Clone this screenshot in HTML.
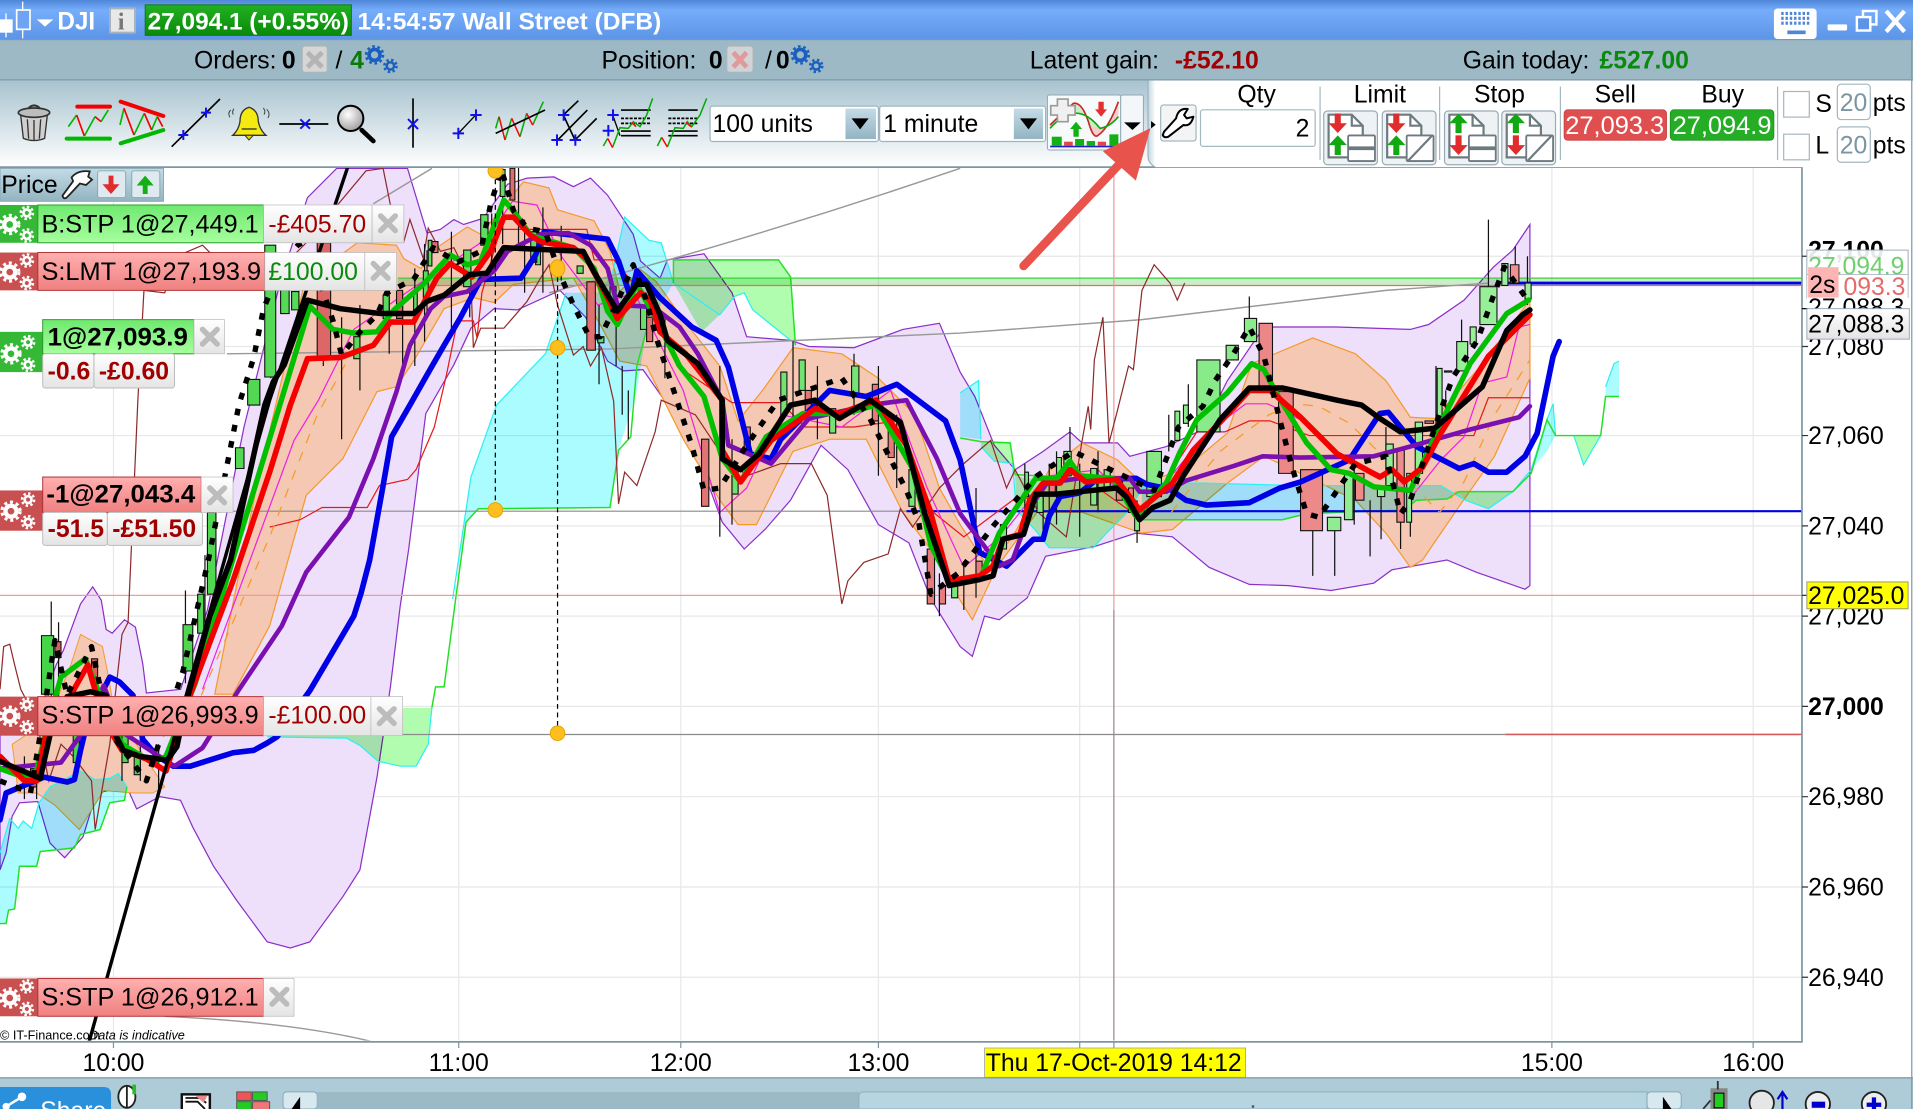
<!DOCTYPE html>
<html><head><meta charset="utf-8"><title>DJI</title>
<style>
html,body{margin:0;padding:0;background:#fff;overflow:hidden}
svg{display:block}
text{font-family:"Liberation Sans",Arial,sans-serif;font-size:20.3px;fill:#000}
.b{font-weight:bold}
.m{mix-blend-mode:multiply}
</style></head><body>
<svg width="1913" height="1109" viewBox="0 0 1568 909" xmlns="http://www.w3.org/2000/svg">
<defs>
<linearGradient id="hd" x1="0" y1="0" x2="0" y2="1"><stop offset="0" stop-color="#4f86d8"/><stop offset=".25" stop-color="#76adfb"/><stop offset="1" stop-color="#5c94e6"/></linearGradient>
<linearGradient id="tb" x1="0" y1="0" x2="0" y2="1"><stop offset="0" stop-color="#a8c3cf"/><stop offset="1" stop-color="#fff"/></linearGradient>
<linearGradient id="gl" x1="0" y1="0" x2="0" y2="1"><stop offset="0" stop-color="#6fe86f"/><stop offset="1" stop-color="#a6ff9e"/></linearGradient>
<linearGradient id="rl" x1="0" y1="0" x2="0" y2="1"><stop offset="0" stop-color="#ffb0b0"/><stop offset="1" stop-color="#f08080"/></linearGradient>
<linearGradient id="wb" x1="0" y1="0" x2="0" y2="1"><stop offset="0" stop-color="#fff"/><stop offset="1" stop-color="#e4e4e4"/></linearGradient>
<linearGradient id="hg" x1="0" y1="0" x2="0" y2="1"><stop offset="0" stop-color="#22b022"/><stop offset="1" stop-color="#0a8a0a"/></linearGradient>
<linearGradient id="ctg" x1="0" y1="0" x2="1" y2="0"><stop offset="0" stop-color="#48d448"/><stop offset="1" stop-color="#9bf09b"/></linearGradient>
<linearGradient id="ctr" x1="0" y1="0" x2="1" y2="0"><stop offset="0" stop-color="#d85c5c"/><stop offset="1" stop-color="#f09090"/></linearGradient>
<linearGradient id="dd" x1="0" y1="0" x2="0" y2="1"><stop offset="0" stop-color="#c3dbe6"/><stop offset="1" stop-color="#93b4c2"/></linearGradient>
<linearGradient id="tab" x1="0" y1="0" x2="1" y2="0"><stop offset="0" stop-color="#c2d6df"/><stop offset="1" stop-color="#fff"/></linearGradient>
<radialGradient id="mg" cx=".4" cy=".35" r=".7"><stop offset="0" stop-color="#fff"/><stop offset="1" stop-color="#9a9a9a"/></radialGradient>
<clipPath id="cc"><rect x="0" y="137" width="1477" height="716"/></clipPath>
<g id="gears" fill="none" stroke="#fff">
<circle cx="8" cy="17" r="4.500" stroke-width="3.500"/><circle cx="8" cy="17" r="7.500" stroke-width="2.500" stroke-dasharray="2.500 2.400"/>
<circle cx="22" cy="7.500" r="2.800" stroke-width="2.200"/><circle cx="22" cy="7.500" r="5" stroke-width="2" stroke-dasharray="2 1.900"/>
<circle cx="22" cy="26" r="2.800" stroke-width="2.200"/><circle cx="22" cy="26" r="5" stroke-width="2" stroke-dasharray="2 1.900"/>
</g>
<g id="bg" fill="none" stroke="#1a5fc0">
<circle cx="7" cy="8" r="4.500" stroke-width="3"/><circle cx="7" cy="8" r="7" stroke-width="2" stroke-dasharray="2.200 2.200"/>
<circle cx="20" cy="17" r="3" stroke-width="2"/><circle cx="20" cy="17" r="5" stroke-width="2" stroke-dasharray="2 2"/>
</g>
<g id="x"><path d="M-6-6L6 6M6-6L-6 6" stroke="#bcbcbc" stroke-width="4.500" stroke-linecap="round"/></g>
<g id="doc"><path d="M0 1h19l9 9v26H0z" fill="#fff" stroke="#6d7a80" stroke-width="1.800"/><path d="M19 1v9h9" fill="none" stroke="#6d7a80" stroke-width="1.800"/></g>
</defs>

<rect width="1568" height="909" fill="#fff"/>
<rect width="1568" height="33" fill="url(#hd)"/>
<rect y="33" width="1568" height="33" fill="#9db9c5"/>
<path d="M0 32.500H1568M0 65.500H1568" stroke="#7e98a5" stroke-width="1"/>
<rect y="66" width="942" height="71" fill="url(#tb)"/>

<!-- CHART -->
<g clip-path="url(#cc)">
<path d="M0 210H1477M0 284H1477M0 357H1477M0 431H1477M0 505H1477M0 579H1477M0 653H1477M0 727H1477M0 801H1477M93 137V853M376 137V853M558 137V853M720 137V853M885 137V853M1272 137V853M1437 137V853" stroke="#e6e8ea" stroke-width="1"/>
<!-- purple band -->
<path d="M0 600L30 590L46 545L52 533L66 495L76 481L83 492L87 516L92 519L102 508L111 514L117 544L120 568L148 565L170 500L200 350L230 230L252 162L276 138L334 138L350 191L361 188L372 180L380 184L396 179L416 151L432 146L454 145L470 153L484 146L498 160L519 192L525 214L541 228L547 213L577 208L600 240L612 276L648 279L663 284L700 285L740 270L770 265L787 305L799 325L815 365L832 385L855 370L877 354L887 363L916 363L926 374L956 366L986 352L1006 312L1036 268L1096 268L1156 270L1171 266L1200 246L1224 219L1240 205L1254 184L1254 480L1250 483L1210 469L1186 459L1141 467L1126 478L1091 484L1056 480L1024 479L991 465L961 440L931 437L897 448L857 456L842 490L819 508L807 505L797 538L787 530L763 491L745 445L720 430L695 385L673 365L648 410L627 434L610 450L592 428L578 390L560 350L527 303L511 304L498 296L480 260L459 238L424 254L405 253L386 269L372 299L349 339L335 450L328 497L320 563L309 637L295 713L281 735L254 772L238 777L219 772L194 738L175 710L158 678L148 656L131 653L112 663L104 645L79 650L68 686L53 703L41 691L31 657L16 658L10 669L5 699L0 713Z" fill="#eee0fb" stroke="#8a2fc8" stroke-width="1"/>
<!-- orange band -->
<path d="M176 569L210 400L250 230L293 199L325 201L331 212L345 220L358 203L383 186L394 192L429 149L450 154L457 172L487 181L500 206L508 239L525 221L538 231L560 262L590 300L605 345L625 320L650 285L690 290L720 310L750 340L770 400L787 430L810 465L830 440L860 385L887 363L916 377L936 396L970 385L1006 355L1026 298L1076 277L1111 290L1136 312L1156 342L1176 343L1211 303L1254 246L1254 310L1225 374L1196 415L1166 459L1156 465L1136 437L1111 410L1066 388L1036 374L1006 396L961 434L936 437L887 420L850 420L817 465L797 508L787 492L770 460L740 420L710 360L680 360L650 370L620 430L605 430L590 410L560 360L530 300L508 296L492 266L470 228L421 233L405 248L388 244L364 253L339 296L325 317L309 321L281 376L251 406L221 513L191 569Z" fill="#f4c8b2" stroke="#f59a2a" stroke-width="1"/>
<path d="M58 545L66 520L84 530L88 550L95 590L105 600L135 645L125 650L110 650L85 648L65 680L45 660L30 650L15 650L10 610L40 590Z" fill="#f4c8b2" stroke="#f59a2a" stroke-width=".8"/>
<!-- clouds (multiply) -->
<g class="m">
<path d="M0 699L8 671L15 679L19 673L26 679L32 658L41 645L66 632L78 639L90 638L97 634L104 645L102 656L90 658L82 680L66 684L61 695L33 698L30 710L16 710L12 745L7 746L5 757L0 757Z" fill="#aafcff"/>
<path d="M371 491L386 391L407 332L447 290L464 240L490 240L502 224L512 178L532 197L542 199L552 232L530 270L522 320L507 369L500 416L392 417L382 428Z" fill="#aafcff"/>
<path d="M552 213L638 213L648 227L652 283L648 279L617 254L610 240L602 243L590 258L575 272L552 232Z" fill="#b0fdb0"/>
<path d="M219 604L284 605L295 611L310 624L328 628L341 628L351 610L354 580L219 582Z" fill="#b0fdb0"/>
<path d="M787 322L802 312L804 360L787 358Z" fill="#aafcff"/>
<path d="M804 362L828 363L832 389L830 380L815 378L804 366Z" fill="#b0fdb0"/>
<path d="M832 389L840 392L940 395L923 421L907 437L896 449L884 449L860 449L849 435L833 418Z" fill="#b0fdb0"/>
<path d="M936 396L986 396L1066 398L1181 398L1201 410L1220 417L1196 403L1186 409L1161 410L1151 418L1071 421L1051 426L936 426Z" fill="#aafcff"/>
<path d="M1196 403L1240 403L1220 417L1201 410Z" fill="#b0fdb0"/>
<path d="M1220 417L1240 403L1255 388L1268 344L1273 331L1275 357L1268 370L1255 385L1240 403Z" fill="#aafcff"/>
<path d="M1290 357L1312 357L1305 369L1298 381Z" fill="#b0fdb0"/>
<path d="M1316 325L1316 317L1323 298L1327 296L1327 325Z" fill="#aafcff"/>
</g>
<g fill="none" stroke="#2cf0f0" stroke-width="1">
<path d="M0 699L8 671L15 679L19 673L26 679L32 658L41 645L66 632L78 639L90 638L97 634L104 645"/>
<path d="M371 491L386 391L407 332L447 290L464 240M502 224L512 178L532 197L542 199L552 232L590 258L602 243L610 240L617 254L648 279"/>
<path d="M787 322L802 312L804 360M804 366L815 378L830 380L833 418L849 435L860 449L884 449L896 449L907 437L923 421L940 395"/>
<path d="M936 396L986 396L1066 398L1181 398L1201 410L1220 417L1240 403L1255 385L1268 344L1273 331L1275 357"/>
<path d="M1290 357L1298 381L1305 369L1312 357M1316 317L1323 298L1327 296M219 604L284 605L295 611L310 624L328 628L341 628L351 610L354 580"/>
</g>
<g fill="none" stroke="#22e022" stroke-width="1.200">
<path d="M0 757L5 757L7 746L12 745L16 710L30 710L33 698L61 695L66 684L82 680L90 658L102 656L104 645"/>
<path d="M354 580L357 563L364 563L374 487L382 428L392 417L500 416L507 369L517 358L522 300L530 270M552 232L552 213L638 213L648 227L652 283"/>
<path d="M787 359L804 362L828 363L832 389L940 395M936 426L1051 426L1071 421L1151 418L1161 410L1186 409L1196 403L1240 403L1255 388L1268 344L1275 357L1312 357L1316 325L1327 325"/>
</g>
<!-- h lines -->
<g class="m"><rect x="326" y="228" width="1151" height="6" fill="#c8f0c8"/></g>
<path d="M326 228H1477" stroke="#3ecf3e" stroke-width="1"/>
<path d="M326 234H1477" stroke="#e56a6a" stroke-width="1"/>
<path d="M0 488H1477" stroke="#f29a9a" stroke-width="1"/>
<path d="M913 137V853" stroke="#f09a9a" stroke-width="1"/>
<path d="M913 500V853" stroke="#888" stroke-width=".8"/>
<path d="M450 240Q620 195 787 138M306 167L354 138" fill="none" stroke="#999" stroke-width="1.200"/>
<path d="M186 290L500 286L787 273L936 262L1136 238L1220 232" fill="none" stroke="#999" stroke-width="1.200"/>
<path d="M135 833Q241 838 306 854" fill="none" stroke="#999" stroke-width="1.200"/>
<path d="M0 419H743M0 602H1234" stroke="#8a8a8a" stroke-width="1"/>
<path d="M743 419H1477" stroke="#0000e6" stroke-width="1.800"/>
<path d="M1234 602H1477" stroke="#d65a5a" stroke-width="1.300"/>
<path d="M1235 232H1477" stroke="#0000e6" stroke-width="2.400"/>
<!-- brown thin -->
<path d="M0 565L3 530L8 528L12 545L17 565L30 590L40 640L50 610L60 620L75 640L78 680L90 610L100 520L105 510L113 328L118 238L135 240L145 210L166 201L180 215L215 235L250 200L300 140L314 138L320 168L331 198L336 180L347 212L351 187L361 206L372 203L386 231L388 285L394 269L405 269L413 269L432 247L443 228L450 217L457 250L470 291L478 284L484 300L493 285L503 329L507 413L512 387L522 398L537 354L542 328L570 340L590 370L612 390L640 380L665 380L678 406L690 495L695 476L708 461L728 454L738 417L748 432L770 400L790 380L812 361L815 370L825 400L832 385L840 400L852 421L874 440L887 361L892 333L894 352L897 295L904 260L909 363L915 340L925 300L929 303L936 238L946 217L959 232L965 246L971 232" fill="none" stroke="#8e2a2a" stroke-width="1"/>
<path d="M221 432L246 426L264 416L301 416L311 398L334 393L341 385L356 350L366 307L375 263L388 263L391 277L395 240L410 188L481 188L487 213L503 213L530 245L555 300L600 330L640 330L660 350L700 350L735 345L765 420L790 440L830 410L900 400L935 425L981 354L1004 354L1024 345L1041 345L1073 357L1208 357L1220 326L1254 326" fill="none" stroke="#e81818" stroke-width="1"/>
<path d="M166 565L241 361L261 328L290 270L340 235L400 195L420 165L440 168L460 210L490 250L520 240L560 320L590 420L612 400L640 340L690 350L730 320L760 400L790 465L820 440L860 390L900 385L935 420L989 355L1021 331L1039 331L1066 344L1096 372L1136 391L1158 406L1181 377L1200 358L1215 314L1235 309L1245 268L1254 266" fill="none" stroke="#f022e0" stroke-width="1"/>
<path d="M165 570L221 440L260 340L310 250M960 420L1000 370L1040 340L1061 331L1081 333L1106 347L1145 385L1180 420L1200 395L1225 340L1254 295" fill="none" stroke="#f59a2a" stroke-width="1" stroke-dasharray="8 8"/>
<!-- wicks -->
<path d="M42 493V580M48 510V590M1076 385V472M1094 435V472M1123 410V456M1132 407V442M1156 428V440M1198 262V304M1220 180V235M1242 202V232M1252 210V250M1024 243V262M1177 300V350M1185 320V350M1136 350V400M974 315V350M958 340V370M877 350V390M590 300V440M600 360V430M280 260V360M222 230V310M265 190V300M720 300V390M735 340V400M650 280V350M670 300V360M700 290V340M800 400V490M770 470V505M790 460V500M932 410V445M545 260V310M491 250V315M505 260V300M425 130V200M445 170V240M370 190V270M385 210V260M348 200V280M340 220V300M412 138V200M168 455V520M152 484V560M100 590V640M115 600V640M130 610V650M62 560V620M20 620V655M30 630V655M840 380V420M860 380V430M855 400V440M900 370V420M885 380V440M866 370V430M1110 370V430M1148 420V450M510 300V340M515 320V360M295 250V320M319 230V290M330 240V300M350 205V260M403 175V225M430 180V240M460 185V230" stroke="#111" stroke-width="1"/>
<!-- candles green -->
<path d="M981 295h19v59h-19zM1005 283h10v12h-10zM1020 261h10v19h-10zM1088 424h11v11h-11zM1102 388h7v38h-7zM1129 399h6v8h-6zM1136 364h6v34h-6zM1153 388h4v40h-4zM1160 346h6v42h-6zM1178 302h4v44h-4zM1194 280h9v24h-9zM1205 268h5v14h-5zM1213 235h14v31h-14zM1231 216h5v18h-5zM1250 232h5v13h-5zM940 370h12v37h-12zM963 337h4v24h-4zM970 332h4v15h-4zM894 384h5v30h-5zM866 375h4v21h-4zM840 387h3v20h-3zM203 311h10v21h-10zM217 201h9v108h-9zM230 231h7v26h-7zM193 367h7v17h-7zM170 420h7v67h-7zM150 512h8v38h-8zM162 487h5v32h-5zM34 521h10v48h-10zM239 239h6v15h-6zM290 276h5v18h-5zM314 242h5v19h-5zM339 240h3v18h-3zM347 222h4v22h-4zM351 197h3v21h-3zM394 176h6v25h-6zM410 139h4v22h-4zM439 203h4v14h-4zM473 218h5v6h-5zM490 276h5v5h-5zM380 205h6v30h-6zM435 190h5v25h-5zM500 235h5v25h-5zM525 250h5v20h-5zM600 385h5v20h-5zM640 305h5v35h-5zM655 295h5v25h-5zM680 335h5v20h-5zM698 300h6v25h-6zM745 385h5v30h-5zM780 475h5v15h-5zM820 430h5v20h-5zM850 400h5v20h-5zM872 370h6v20h-6zM905 385h5v15h-5zM930 420h4v15h-4zM60 600h5v25h-5zM100 600h5v25h-5zM110 620h5v15h-5z" fill="url(#ctg)" stroke="#111" stroke-width=".9"/>
<!-- candles red -->
<path d="M1032 265h11v56h-11zM1048 321h12v67h-12zM1066 385h18v50h-18zM1111 388h7v22h-7zM1145 369h6v59h-6zM1168 345h7v2h-7zM1184 304h6v1h-6zM1238 217h7v15h-7zM260 199h11v93h-11zM325 238h5v23h-5zM354 198h5v9h-5zM418 138h4v26h-4zM481 231h7v56h-7zM45 526h5v13h-5zM575 360h6v55h-6zM610 350h5v20h-5zM660 320h5v20h-5zM715 315h5v30h-5zM728 350h5v25h-5zM760 450h6v45h-6zM770 480h5v15h-5zM800 460h5v15h-5zM860 395h5v10h-5zM915 395h5v15h-5zM925 400h4v20h-4zM530 260h5v20h-5zM75 540h5v15h-5zM25 630h5v15h-5z" fill="url(#ctr)" stroke="#111" stroke-width=".9"/>
<!-- bold MAs -->
<g fill="none" stroke-linejoin="round" stroke-linecap="round">
<path d="M0 672L5 650L36 637L55 641L61 639L66 615L72 590L90 555L98 559L109 570L117 606L128 619L142 628L156 628L175 622L191 617L208 615L219 609L227 604L254 566L290 505L296 486L303 459L314 398L321 358L336 332L353 302L364 283L377 261L394 229L427 228L439 209L446 190L498 196L507 214L517 244L522 222L541 244L567 268L587 279L597 301L607 340L615 372L632 376L640 360L680 320L710 325L735 315L775 345L787 377L803 453L825 464L847 442L855 442L860 423L869 407L885 404L899 393L931 392L940 397L959 401L972 410L989 414L1024 412L1049 400L1066 395L1106 377L1131 339L1138 338L1161 366L1196 384L1208 380L1220 387L1235 387L1250 374L1260 355L1273 292L1278 280" stroke="#0000e6" stroke-width="4.600"/>
<path d="M0 630L50 625L65 604L85 562L100 600L143 628L166 613L196 565L231 513L251 469L286 424L306 376L325 321L336 283L353 253L364 243L383 239L405 222L416 206L443 192L466 191L484 201L498 220L506 250L525 251L536 252L557 268L572 290L592 328L597 365L632 380L663 343L713 332L743 328L768 376L787 421L819 464L830 459L847 412L858 396L885 392L926 392L934 403L956 403L972 394L1011 382L1035 374L1066 375L1126 374L1156 366L1205 352L1245 342L1254 333" stroke="#7a10b0" stroke-width="3.800"/>
<path d="M0 630L28 640L40 590L50 555L70 540L90 590L100 610L125 625L136 620L160 560L254 251L273 270L290 273L309 272L323 254L347 233L369 209L383 217L394 214L413 164L421 173L435 193L470 203L487 220L498 255L506 266L522 233L536 258L557 300L577 325L592 376L607 395L628 358L658 339L693 339L718 332L748 384L763 447L778 476L803 475L819 437L849 392L866 392L877 378L885 390L912 392L931 423L956 396L967 371L981 344L1006 322L1026 298L1036 303L1046 322L1071 363L1091 385L1106 388L1126 399L1156 402L1181 347L1205 298L1235 257L1253 246" stroke="#00c000" stroke-width="4.400"/>
<path d="M0 620L20 640L30 640L40 590L55 575L72 545L85 590L100 615L120 622L136 632L156 569L191 476L221 387L238 332L252 294L279 293L306 283L320 264L339 264L358 228L369 216L387 227L402 206L413 178L421 178L435 193L443 198L470 203L481 212L498 244L506 261L525 240L533 246L541 272L562 290L592 328L592 369L607 395L632 361L668 335L688 339L718 328L743 365L763 421L778 476L803 472L814 464L822 442L836 438L844 410L855 396L869 396L877 385L890 395L915 393L923 403L934 418L961 396L978 369L1002 344L1024 320L1041 320L1066 342L1096 372L1131 391L1141 385L1151 395L1166 383L1181 355L1220 292L1254 258" stroke="#f40000" stroke-width="4.600"/>
<path d="M0 624L14 630L33 638L42 598L55 571L74 567L87 570L94 601L101 615L115 620L137 623L145 612L153 574L172 505L189 459L217 332L224 313L233 299L252 246L279 253L312 257L339 257L350 247L364 242L385 225L399 224L413 203L478 206L487 223L506 255L522 233L530 233L541 258L547 279L572 298L592 328L592 376L607 385L622 372L648 332L668 328L688 343L713 328L738 346L758 421L778 480L803 475L814 472L822 442L839 438L849 405L866 405L885 403L915 400L923 407L934 426L945 416L959 410L970 390L1000 344L1024 318L1051 318L1096 328L1116 332L1131 343L1148 354L1176 351L1215 317L1235 271L1248 258L1254 254" stroke="#000" stroke-width="4.500"/>
<path d="M73 854L130 650L221 328L285 137" stroke="#000" stroke-width="2.800"/>
<path d="M0 640L25 650L35 590L45 525L55 570L75 530L90 600L120 640L150 550L171 458L196 331L208 293L216 253L232 215L245 200L262 230L273 263L280 291L295 272L309 258L317 240L339 229L355 203L375 215L394 206L402 168L411 139L421 173L432 187L447 190L459 225L470 250L483 276L492 276L505 250L519 217L529 244L539 280L567 365L577 402L590 400L612 365L638 328L690 310L713 343L743 402L753 428L763 487L785 470L815 430L850 390L880 370L900 380L946 402L966 350L986 333L996 312L1011 290L1024 268L1036 292L1049 344L1059 383L1071 421L1081 424L1096 402L1111 380L1136 374L1148 421L1156 410L1181 336L1191 309L1211 279L1225 240L1233 219L1250 243" stroke="#000" stroke-width="4.400" stroke-dasharray="5.500 8" stroke-linecap="butt"/>
</g>
<path d="M406 140V418M457 220V601" stroke="#000" stroke-width="1" stroke-dasharray="4 3"/>
<g fill="#fdbf20" stroke="#e6a300" stroke-width=".8"><ellipse cx="406" cy="418" rx="6" ry="6"/><ellipse cx="457" cy="601" rx="6" ry="6"/><ellipse cx="457" cy="285" rx="6" ry="6"/><ellipse cx="457" cy="220" rx="6" ry="7"/><ellipse cx="406" cy="140" rx="6" ry="6"/></g>
<text x="0" y="852" style="font-size:10.400px">© IT-Finance.com</text><text x="73" y="852" style="font-size:10.400px;font-style:italic">Data is indicative</text>
</g>
<path d="M0 137H1477V854H0" fill="none" stroke="#7e96a3" stroke-width="1.400"/>

<!-- Price box -->
<rect x="0" y="138" width="134" height="27" fill="url(#dd)" stroke="#8aa8b6" stroke-width=".8"/>
<text x="1" y="158">Price</text>
<g transform="translate(50,138) scale(.62)"><path d="M38 4L36 11L41 15L33 22L25 20L12 34L7 39Q3 41 2 36L16 17L14 12Q22 2 38 4Z" fill="#fff" stroke="#222" stroke-width="2.400"/></g>
<rect x="80" y="140" width="23" height="22" rx="2" fill="#dfeaf0" stroke="#8aa" stroke-width=".8"/><path d="M89 144v7h-5l7 8 7-8h-5v-7z" fill="#e02c2c"/>
<rect x="108" y="140" width="23" height="22" rx="2" fill="#dfeaf0" stroke="#8aa" stroke-width=".8"/><path d="M117 159v-7h-5l7-8 7 8h-5v7z" fill="#12b012"/>

<!-- Order labels -->
<g>
<rect x="0" y="168" width="31" height="31" fill="#35b835"/><use href="#gears" x="0" y="167"/>
<rect x="31" y="168" width="185" height="31" fill="url(#gl)" stroke="#2a9a2a" stroke-width=".8"/><text x="34" y="190.500" textLength="178" lengthAdjust="spacingAndGlyphs">B:STP 1@27,449.1</text>
<rect x="216" y="168" width="89" height="31" fill="url(#wb)" stroke="#bbb" stroke-width=".6"/><text x="220" y="190.500" style="fill:#a00000">-£405.70</text>
<rect x="305" y="168" width="26" height="31" fill="url(#wb)" stroke="#bbb" stroke-width=".6"/><use href="#x" x="318" y="183"/>

<rect x="0" y="207" width="31" height="31" fill="#c85050"/><use href="#gears" x="0" y="206"/>
<rect x="31" y="207" width="186" height="31" fill="url(#rl)" stroke="#b03030" stroke-width=".8"/><text x="34" y="229.500" textLength="180" lengthAdjust="spacingAndGlyphs">S:LMT 1@27,193.9</text>
<rect x="217" y="207" width="82" height="31" fill="url(#wb)" stroke="#bbb" stroke-width=".6"/><text x="220" y="229.500" style="fill:#0a8a0a">£100.00</text>
<rect x="299" y="207" width="26" height="31" fill="url(#wb)" stroke="#bbb" stroke-width=".6"/><use href="#x" x="312" y="222"/>

<rect x="0" y="272" width="35" height="33" fill="#35b835"/><use href="#gears" x="1" y="273"/>
<rect x="35" y="262" width="124" height="28" fill="url(#gl)" stroke="#2a9a2a" stroke-width=".8"/><text x="39" y="283" class="b" textLength="115" lengthAdjust="spacingAndGlyphs">1@27,093.9</text>
<rect x="159" y="262" width="25" height="28" fill="url(#wb)" stroke="#bbb" stroke-width=".6"/><use href="#x" x="172" y="276"/>
<rect x="35" y="290" width="42" height="28" rx="2" fill="url(#wb)" stroke="#bbb" stroke-width=".8"/><text x="39" y="311" class="b" style="fill:#a00000">-0.6</text>
<rect x="77" y="290" width="66" height="28" rx="2" fill="url(#wb)" stroke="#bbb" stroke-width=".8"/><text x="81" y="311" class="b" style="fill:#a00000">-£0.60</text>

<rect x="0" y="402" width="35" height="33" fill="#c85050"/><use href="#gears" x="1" y="402"/>
<rect x="35" y="391" width="130" height="29" fill="url(#rl)" stroke="#b03030" stroke-width=".8"/><text x="38" y="412" class="b" textLength="122" lengthAdjust="spacingAndGlyphs">-1@27,043.4</text>
<rect x="165" y="391" width="26" height="29" fill="url(#wb)" stroke="#bbb" stroke-width=".6"/><use href="#x" x="178" y="406"/>
<rect x="35" y="420" width="53" height="27" rx="2" fill="url(#wb)" stroke="#bbb" stroke-width=".8"/><text x="39" y="440" class="b" style="fill:#a00000">-51.5</text>
<rect x="88" y="420" width="78" height="27" rx="2" fill="url(#wb)" stroke="#bbb" stroke-width=".8"/><text x="92" y="440" class="b" style="fill:#a00000">-£51.50</text>

<rect x="0" y="571" width="31" height="32" fill="#c85050"/><use href="#gears" x="0" y="570"/>
<rect x="31" y="571" width="185" height="32" fill="url(#rl)" stroke="#b03030" stroke-width=".8"/><text x="34" y="593" textLength="178" lengthAdjust="spacingAndGlyphs">S:STP 1@26,993.9</text>
<rect x="216" y="571" width="88" height="32" fill="url(#wb)" stroke="#bbb" stroke-width=".6"/><text x="220" y="593" style="fill:#a00000">-£100.00</text>
<rect x="304" y="571" width="26" height="32" fill="url(#wb)" stroke="#bbb" stroke-width=".6"/><use href="#x" x="317" y="587"/>

<rect x="0" y="802" width="31" height="31" fill="#c85050"/><use href="#gears" x="0" y="801"/>
<rect x="31" y="802" width="185" height="31" fill="url(#rl)" stroke="#b03030" stroke-width=".8"/><text x="34" y="824" textLength="178" lengthAdjust="spacingAndGlyphs">S:STP 1@26,912.1</text>
<rect x="216" y="802" width="25" height="31" fill="url(#wb)" stroke="#bbb" stroke-width=".6"/><use href="#x" x="229" y="817"/>
</g>

<!-- Right axis -->
<path d="M1477 210h5M1477 284h5M1477 357h5M1477 431h5M1477 505h5M1477 579h5M1477 653h5M1477 727h5M1477 801h5M1477 488h5" stroke="#333" stroke-width="1"/>
<text x="1482" y="212" class="b">27,100</text>
<text x="1482" y="291">27,080</text>
<text x="1482" y="364">27,060</text>
<text x="1482" y="438">27,040</text>
<text x="1482" y="512">27,020</text>
<text x="1482" y="586" class="b">27,000</text>
<text x="1482" y="660">26,980</text>
<text x="1482" y="734">26,960</text>
<text x="1482" y="808">26,940</text>
<rect x="1481" y="205" width="83" height="24" fill="#fff" fill-opacity=".9" stroke="#9ab" stroke-width=".8"/>
<text x="1482" y="225" style="fill:#6fd06f">27,094.9</text>
<rect x="1481" y="225" width="83" height="20" fill="#fff" stroke="#9ab" stroke-width=".6"/>
<text x="1511" y="242" style="fill:#e56a6a">093.3</text>
<rect x="1482" y="219" width="25" height="25" fill="#ffb4b4"/>
<text x="1483" y="240">2s</text>
<rect x="1481" y="244" width="84" height="9" fill="#fff"/>
<text x="1482" y="259">27,088.3</text>
<path d="M1477 253h5" stroke="#000"/>
<rect x="1481" y="253" width="84" height="25" fill="url(#wb)" stroke="#9ab" stroke-width=".8"/>
<text x="1482" y="272.500">27,088.3</text>
<rect x="1481" y="477" width="83" height="22" fill="#ffff00" stroke="#9a9a6a" stroke-width=".8"/>
<text x="1482" y="495">27,025.0</text>

<!-- Time axis -->
<path d="M93 854v5M376 854v5M558 854v5M720 854v5M885 854v5M913 854v5M1272 854v5M1437 854v5" stroke="#7e96a3" stroke-width="1"/>
<g text-anchor="middle"><text x="93" y="878">10:00</text><text x="376" y="878">11:00</text><text x="558" y="878">12:00</text><text x="720" y="878">13:00</text><text x="1272" y="878">15:00</text><text x="1437" y="878">16:00</text></g>
<rect x="807" y="859" width="214" height="24" fill="#ffff00" stroke="#999" stroke-width=".6"/>
<text x="808" y="878">Thu 17-Oct-2019 14:12</text>

<!-- Bottom bar -->
<rect y="883" width="1568" height="26" fill="#aecbd8"/>
<path d="M0 883.500H1568" stroke="#7e98a5"/>
<path d="M0 891H85Q91 891 91 897V909H0Z" fill="#2a90dc"/>
<circle cx="5" cy="907" r="3" fill="#fff"/><circle cx="18" cy="899" r="3.500" fill="#fff"/><path d="M5 907L18 899" stroke="#fff" stroke-width="2"/>
<text x="33" y="917" style="fill:#fff">Share</text>
<ellipse cx="104" cy="899" rx="7" ry="9" fill="#fff" stroke="#222" stroke-width="1.500"/><path d="M104 890V908" stroke="#222" stroke-width="1.500"/><path d="M110 889V897" stroke="#22c022" stroke-width="3"/>
<rect x="149" y="897" width="23" height="16" fill="#fff" stroke="#111" stroke-width="2"/><path d="M152 903h10l6 6M152 900h16M164 900l5 4" stroke="#111" fill="none" stroke-width="1.500"/><path d="M160 898h10l-3 6z" fill="#e88"/>
<rect x="194" y="895" width="12" height="7" fill="#e55" stroke="#555" stroke-width=".8"/><rect x="207" y="895" width="12" height="7" fill="#2c2" stroke="#555" stroke-width=".8"/><rect x="194" y="903" width="12" height="7" fill="#2c2" stroke="#555" stroke-width=".8"/><rect x="207" y="903" width="14" height="7" fill="#e77" stroke="#555" stroke-width=".8"/>
<rect x="232" y="895" width="28" height="14" rx="3" fill="#d8e8ef" stroke="#88a8b6" stroke-width=".8"/><path d="M246 899L239 909H246Z" fill="#000"/>
<rect x="260" y="895" width="444" height="14" fill="#9bb9c6"/>
<path d="M704 909V899Q704 895 708 895H1350V909Z" fill="#b6d4e2" stroke="#8fb0be" stroke-width=".8"/>
<rect x="1026" y="906" width="2" height="2" fill="#555"/>
<rect x="1350" y="895" width="28" height="14" rx="3" fill="#d8e8ef" stroke="#88a8b6" stroke-width=".8"/><path d="M1363 899L1370 909H1363Z" fill="#000"/>
<rect x="1402" y="892" width="14" height="17" fill="#888"/><rect x="1405" y="896" width="8" height="12" fill="#2c2" stroke="#111"/><path d="M1408 886V893M1396 909L1402 902" stroke="#333" stroke-width="1.500"/>
<ellipse cx="1444" cy="904" rx="10" ry="10" fill="#e6e6e6" stroke="#222" stroke-width="1.500"/>
<path d="M1461 909V897M1457 901L1461 895L1465 901" stroke="#00c" stroke-width="1.800" fill="none"/>
<circle cx="1490" cy="905" r="10" fill="#eee" stroke="#222" stroke-width="1.500"/><rect x="1485" y="903" width="11" height="5" fill="#00c"/>
<circle cx="1536" cy="905" r="10" fill="#eee" stroke="#222" stroke-width="1.500"/><path d="M1530 905.500h12M1536 899.500v12" stroke="#00c" stroke-width="3.500"/>

<!-- Header + left toolbar icons (coords from 3x crop) -->
<g transform="scale(.2732)">
<path d="M68 5V115" stroke="#fff" stroke-width="4"/><rect x="50" y="30" width="40" height="58" fill="#6ea4f2" stroke="#fff" stroke-width="5"/>
<path d="M18 40V112" stroke="#fff" stroke-width="4"/><rect x="0" y="58" width="38" height="40" fill="#fff"/>
<path d="M110 58H160L135 80Z" fill="#fff"/>
<rect x="330" y="25" width="75" height="73" rx="3" fill="#e8e8e8" stroke="#a8b4bc" stroke-width="6"/>
<!-- trash -->
<path d="M62 345L70 415Q102 428 134 415L142 345Z" fill="#cfcfcf" stroke="#333" stroke-width="4"/><ellipse cx="102" cy="338" rx="47" ry="14" fill="#bdbdbd" stroke="#333" stroke-width="5"/><path d="M85 325Q102 308 120 325" fill="none" stroke="#333" stroke-width="6"/><path d="M82 358L86 416M102 360V420M122 358L118 416" stroke="#333" stroke-width="4"/>
<!-- channel -->
<path d="M232 320H330" stroke="#f40000" stroke-width="12" stroke-linecap="round"/><path d="M200 416H330" stroke="#00b800" stroke-width="12" stroke-linecap="round"/>
<path d="M205 380L230 345M253 408L285 350M303 365L325 330" stroke="#00b800" stroke-width="5" fill="none"/><path d="M230 345L253 408M285 350L303 365" stroke="#f40000" stroke-width="5" fill="none"/>
<!-- triangle -->
<path d="M362 305L490 348" stroke="#f40000" stroke-width="12" stroke-linecap="round"/><path d="M362 430L490 390" stroke="#00b800" stroke-width="12" stroke-linecap="round"/>
<path d="M360 375L372 325M402 405L433 340M455 390L472 350" stroke="#00b800" stroke-width="5"/><path d="M372 325L402 405M433 340L455 390M472 350L488 380" stroke="#f40000" stroke-width="5"/>
<!-- line -->
<path d="M515 440L660 297" stroke="#000" stroke-width="5"/><path d="M535 405H565M550 390V420M603 338H633M618 323V353" stroke="#1010f0" stroke-width="6"/>
<!-- bell -->
<path d="M747 322Q775 330 775 365Q780 390 798 406H698Q716 390 720 365Q720 330 747 322Z" fill="#f5ea10" stroke="#333" stroke-width="4"/><path d="M725 387H770" stroke="#333" stroke-width="4"/><path d="M735 406H760L747 420Z" fill="#e6d810" stroke="#333" stroke-width="3"/>
<path d="M692 330Q682 340 690 352M702 326Q695 335 700 344M800 328Q812 340 804 354M790 324Q798 334 792 344" fill="none" stroke="#444" stroke-width="3"/>
<path d="M838 372H985" stroke="#000" stroke-width="5"/><path d="M901 358L930 386M930 358L901 386" stroke="#1010f0" stroke-width="6"/>
</g>
<text x="47" y="24" style="fill:#fff;font-weight:bold;font-size:20.500px" textLength="31" lengthAdjust="spacingAndGlyphs">DJI</text>
<text x="96.500" y="24" style="fill:#777;font-family:'Liberation Serif',serif;font-weight:bold;font-size:20px">i</text>
<rect x="119" y="4" width="169" height="25" fill="url(#hg)" stroke="#0c7a0c" stroke-width=".8"/>
<text x="121" y="24" class="b" style="fill:#fff;font-size:20px" textLength="165" lengthAdjust="spacingAndGlyphs">27,094.1 (+0.55%)</text>
<text x="293" y="24" class="b" style="fill:#fff;font-size:20px" textLength="249" lengthAdjust="spacingAndGlyphs">14:54:57 Wall Street (DFB)</text>
<rect x="1454" y="7" width="35" height="25" rx="3" fill="#fff"/>
<path d="M1460 11h23M1460 15h23M1460 19h23" stroke="#4f86d8" stroke-width="2.500" stroke-dasharray="2 1.500"/><rect x="1465" y="25" width="15" height="3" fill="#4f86d8"/>
<rect x="1498" y="20" width="16" height="5" rx="1" fill="#fff"/>
<rect x="1527" y="9" width="11" height="11" fill="none" stroke="#fff" stroke-width="2"/><rect x="1522" y="14" width="11" height="11" fill="#5c94e6" stroke="#fff" stroke-width="2"/>
<path d="M1546 9L1561 26M1561 9L1546 26" stroke="#fff" stroke-width="3.500"/>

<!-- Info bar -->
<text x="159" y="56">Orders: </text><text x="231" y="56" class="b">0</text>
<rect x="248" y="38" width="20" height="21" rx="2" fill="#d6d6d6" stroke="#bbb" stroke-width=".6"/><path d="M252 43L264 55M264 43L252 55" stroke="#b4b4b4" stroke-width="4"/>
<text x="275" y="56">/</text><text x="287" y="56" class="b" style="fill:#0a7a0a">4</text>
<use href="#bg" x="300" y="37"/>
<text x="493" y="56">Position:</text><text x="581" y="56" class="b">0</text>
<rect x="596" y="38" width="21" height="21" rx="2" fill="#d0d4d6" stroke="#bbb" stroke-width=".6"/><path d="M601 43L612 55M612 43L601 55" stroke="#e09a9a" stroke-width="4"/>
<text x="627" y="56">/</text><text x="636" y="56" class="b">0</text>
<use href="#bg" x="649" y="37"/>
<text x="844" y="56">Latent gain:</text><text x="963" y="56" class="b" style="fill:#a00000">-£52.10</text>
<text x="1199" y="56">Gain today:</text><text x="1311" y="56" class="b" style="fill:#0a8a0a">£527.00</text>

<!-- Toolbar middle icons -->
<g transform="translate(270.500,69.700) scale(.2732)" fill="none">
<circle cx="62" cy="100" r="38" fill="url(#mg)" stroke="#000" stroke-width="6"/><path d="M95 135L130 168" stroke="#000" stroke-width="14" stroke-linecap="round"/>
<path d="M249 40V188" stroke="#000" stroke-width="5"/><path d="M234 102L264 132M264 102L234 132" stroke="#1010f0" stroke-width="6"/>
<path d="M385 145L437 90" stroke="#000" stroke-width="4"/><path d="M368 145H402M385 128V162M421 90H455M438 73V107" stroke="#1010f0" stroke-width="6"/>
<path d="M497 130L507 95M525 165L545 100M570 155L590 85M608 120L640 50" stroke="#0a0" stroke-width="4.500"/><path d="M507 95L525 165M545 100L570 155M590 85L608 120M640 50" stroke="#f00" stroke-width="4.500"/><path d="M497 145L645 75" stroke="#000" stroke-width="5"/>
<path d="M700 90L745 47M683 165L772 75M735 165L800 100M700 90L735 165" stroke="#000" stroke-width="5"/><path d="M684 90H718M701 73V107M664 165H698M681 148V182M719 165H753M736 148V182" stroke="#1010f0" stroke-width="6"/>
<path d="M873 75H962M873 138H962M873 152H962" stroke="#000" stroke-width="5"/><path d="M873 100H962M873 115H962" stroke="#000" stroke-width="5" stroke-dasharray="9 4"/><path d="M848 90L870 152" stroke="#000" stroke-width="4"/><path d="M832 90H866M849 73V107M818 137H852M835 120V154" stroke="#1010f0" stroke-width="6"/><path d="M820 183L833 160M848 186L870 128L895 130L910 110L930 125L950 90L968 40" stroke="#0a0" stroke-width="4.500"/><path d="M833 160L848 188M905 112L918 125" stroke="#f00" stroke-width="4.500"/>
<path d="M1015 75H1103M1015 138H1103M1015 152H1103" stroke="#000" stroke-width="5"/><path d="M1015 100H1103M1015 115H1103" stroke="#000" stroke-width="5" stroke-dasharray="9 4"/><path d="M982 183L995 157M1012 186L1035 128L1060 130L1072 110L1085 125L1110 90L1130 40" stroke="#0a0" stroke-width="4.500"/><path d="M995 157L1012 186M1068 112L1083 125" stroke="#f00" stroke-width="4.500"/>
</g>
<rect x="582" y="87" width="138" height="29" rx="2" fill="#fff" stroke="#9db5c0"/><rect x="693" y="89" width="25" height="25" fill="url(#dd)"/><path d="M698 97H712L705 106Z" fill="#000"/>
<text x="584" y="108">100 units</text>
<rect x="721" y="87" width="136" height="29" rx="2" fill="#fff" stroke="#9db5c0"/><rect x="831" y="89" width="24" height="25" fill="url(#dd)"/><path d="M836 97H850L843 106Z" fill="#000"/>
<text x="724" y="108">1 minute</text>

<!-- Toolbar right white -->
<rect x="947" y="66" width="621" height="71" fill="#fff"/>
<path d="M947 66H941V128Q941 134 947 137Z" fill="url(#tab)"/>
<path d="M941 66V128Q941 134 947 137" fill="none" stroke="#9cb4c0" stroke-width="1"/>

<!-- indicator + wrench (coords from 3x crop) -->
<g transform="translate(852.500,69.700) scale(.2732)">
<rect x="22" y="30" width="220" height="165" rx="6" fill="#f7fafb" stroke="#8fa9b5" stroke-width="3"/>
<rect x="242" y="30" width="68" height="165" rx="6" fill="#f3f7f9" stroke="#8fa9b5" stroke-width="3"/>
<path d="M30 120Q60 90 100 55Q125 55 160 150Q180 170 235 50V95Q205 130 180 130Q140 85 100 85Q60 95 30 130Z" fill="#f6cccc"/>
<path d="M100 85Q140 85 172 125Q150 130 145 110Q120 60 100 55Q80 65 60 105Z" fill="#c6efc6"/>
<path d="M30 120Q60 90 100 55Q125 50 145 110Q160 165 175 150Q205 130 235 50" fill="none" stroke="#c42a2a" stroke-width="5"/>
<path d="M30 130Q60 95 100 85Q140 80 180 130Q210 125 235 95" fill="none" stroke="#0ea80e" stroke-width="5"/>
<path d="M52 42H84V62H105V90H84V110H52V90H32V62H52Z" fill="#f0f0f0" stroke="#9a9a9a" stroke-width="5"/>
<path d="M100 155V132H90L108 110L126 132H116V155Z" fill="#12b012"/>
<path d="M175 50V73H165L183 95L201 73H191V50Z" fill="#e43030"/>
<rect x="35" y="155" width="30" height="27" fill="#12b012"/><rect x="72" y="170" width="26" height="12" fill="#e04848"/><rect x="105" y="162" width="27" height="20" fill="#12b012"/><rect x="140" y="168" width="25" height="14" fill="#12b012"/><rect x="173" y="170" width="25" height="12" fill="#e04848"/><rect x="208" y="148" width="27" height="34" fill="#12b012"/>
<rect x="30" y="182" width="205" height="5" fill="#2222cc"/>
<path d="M252 112H302L277 135Z" fill="#000"/>
<path d="M333 108L347 119L333 130Z" fill="#000"/>
<rect x="362" y="60" width="106" height="108" rx="8" fill="#f4f4f4" stroke="#8fa9b5" stroke-width="3"/>
<path d="M372 140L368 150Q372 160 385 155L430 120Q452 125 460 95L440 100L432 90L443 72Q415 68 408 100Z" fill="#fff" stroke="#000" stroke-width="6" stroke-linejoin="round"/>
</g>
<rect x="984" y="90" width="94" height="30" rx="2" fill="#fff" stroke="#a4b8c2"/>
<text x="1062" y="112">2</text>
<g text-anchor="middle"><text x="1030" y="84">Qty</text><text x="1131" y="84">Limit</text><text x="1229" y="84">Stop</text><text x="1324" y="84">Sell</text><text x="1412" y="84">Buy</text></g>
<path d="M1082 71V131M1180 71V131M1279 71V131M1457 71V131" stroke="#a4b8c2"/>
<g>
<rect x="1085" y="91" width="44" height="44" rx="3" fill="#eef2f4" stroke="#98acb6"/>
<use href="#doc" x="1089" y="93"/>
<path d="M1094 93v8h-5l7.500 8 7.500-8h-5v-8z" fill="#e02c2c"/><path d="M1094 127v-8h-5l7.500-8 7.500 8h-5v8z" fill="#12a812"/>
<rect x="1105" y="111" width="22" height="21" rx="1" fill="#fff" stroke="#6d7a80" stroke-width="1.500"/><path d="M1105 121.500H1127" stroke="#6d7a80" stroke-width="3"/>
<rect x="1133" y="91" width="44" height="44" rx="3" fill="#eef2f4" stroke="#98acb6"/>
<use href="#doc" x="1137" y="93"/>
<path d="M1142 93v8h-5l7.500 8 7.500-8h-5v-8z" fill="#e02c2c"/><path d="M1142 127v-8h-5l7.500-8 7.500 8h-5v8z" fill="#12a812"/>
<rect x="1153" y="111" width="22" height="21" rx="1" fill="#fff" stroke="#6d7a80" stroke-width="1.500"/><path d="M1154 132L1174 111" stroke="#6d7a80" stroke-width="1.800"/>
<rect x="1184" y="91" width="44" height="44" rx="3" fill="#eef2f4" stroke="#98acb6"/>
<use href="#doc" x="1188" y="93"/>
<path d="M1193 109v-8h-5l7.500-8 7.500 8h-5v8z" fill="#12a812"/><path d="M1193 111v8h-5l7.500 8 7.500-8h-5v-8z" fill="#e02c2c"/>
<rect x="1204" y="111" width="22" height="21" rx="1" fill="#fff" stroke="#6d7a80" stroke-width="1.500"/><path d="M1204 121.500H1226" stroke="#6d7a80" stroke-width="3"/>
<rect x="1231" y="91" width="44" height="44" rx="3" fill="#eef2f4" stroke="#98acb6"/>
<use href="#doc" x="1235" y="93"/>
<path d="M1240 109v-8h-5l7.500-8 7.500 8h-5v8z" fill="#12a812"/><path d="M1240 111v8h-5l7.500 8 7.500-8h-5v-8z" fill="#e02c2c"/>
<rect x="1251" y="111" width="22" height="21" rx="1" fill="#fff" stroke="#6d7a80" stroke-width="1.500"/><path d="M1252 132L1272 111" stroke="#6d7a80" stroke-width="1.800"/>
</g>
<rect x="1282" y="90" width="84" height="25" rx="3" fill="#e04f4f" stroke="#c43a3a" stroke-width=".6"/>
<text x="1283" y="110" style="fill:#fff" textLength="81" lengthAdjust="spacingAndGlyphs">27,093.3</text>
<rect x="1369" y="90" width="85" height="25" rx="3" fill="#26ad26" stroke="#188a18" stroke-width=".6"/>
<text x="1371" y="110" style="fill:#fff" textLength="81" lengthAdjust="spacingAndGlyphs">27,094.9</text>
<rect x="1462" y="75" width="21" height="21" fill="#fff" stroke="#a4b8c2"/><text x="1488" y="92">S</text>
<rect x="1506" y="69" width="27" height="29" rx="3" fill="#fff" stroke="#a4b8c2"/><text x="1508" y="91" style="fill:#7a96a4">20</text>
<text x="1535" y="91">pts</text>
<rect x="1462" y="110" width="21" height="21" fill="#fff" stroke="#a4b8c2"/><text x="1488" y="126">L</text>
<rect x="1506" y="104" width="27" height="29" rx="3" fill="#fff" stroke="#a4b8c2"/><text x="1508" y="126" style="fill:#7a96a4">20</text>
<text x="1535" y="126">pts</text>
<path d="M1567 33V909" stroke="#7e98a5" stroke-width="1"/>

<!-- Red arrow -->
<path d="M839 218L918 134" stroke="#e8534b" stroke-width="7" stroke-linecap="round"/>
<path d="M943 105L904 124L931 148Z" fill="#e8534b"/>
</svg>
</body></html>
